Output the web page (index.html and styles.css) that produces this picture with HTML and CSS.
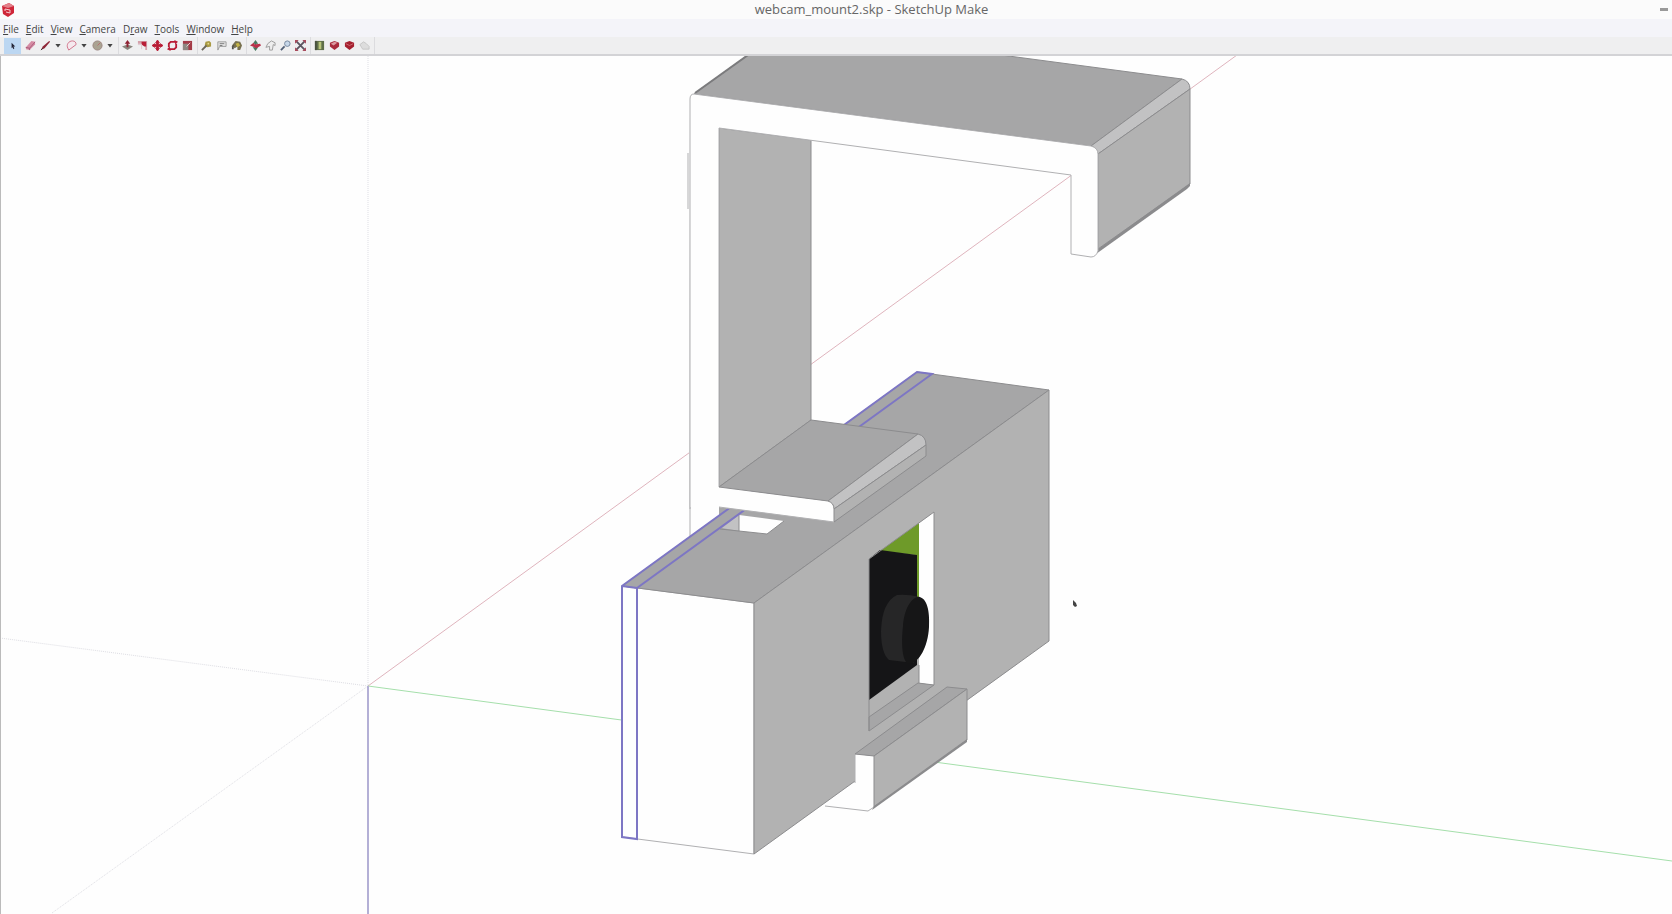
FILE: index.html
```html
<!DOCTYPE html>
<html lang="en">
<head>
<meta charset="UTF-8">
<meta name="viewport" content="width=device-width, initial-scale=1.0">
<title>webcam_mount2.skp - SketchUp Make</title>
<link rel="stylesheet" href="styles.css">
</head>
<body>

<header class="titlebar">
    <svg class="logo" viewBox="0 0 14 14"><path d="M1 3L8 0l5 3v7l-6 4-5-3z" fill="#cf2638"/><path d="M1 3l6 2 6-2-5-3z" fill="#e4808a"/><path d="M4 6l5 1v3l-4-1M4 6v2" fill="none" stroke="#f6c9cd"/></svg>
    <h1>webcam_mount2.skp - SketchUp Make</h1>
    <button class="minimize" aria-label="Minimize"></button>
</header>

<nav class="menubar">
    <button><u>F</u>ile</button>
    <button><u>E</u>dit</button>
    <button><u>V</u>iew</button>
    <button><u>C</u>amera</button>
    <button>D<u>r</u>aw</button>
    <button><u>T</u>ools</button>
    <button><u>W</u>indow</button>
    <button><u>H</u>elp</button>
</nav>

<div class="toolbar">
    <div class="group">
        <button class="tool active" aria-label="Select"><svg viewBox="0 0 12 12"><path d="M5 3v6l1-1 1 2 1-1-1-2h2z" fill="#223"/></svg></button>
        <button class="tool" aria-label="Eraser"><svg viewBox="0 0 12 12"><path d="M1 8l6-7 4 1v3l-6 6-4-1z" fill="#d58ba3"/><path d="M1 8l4 1 6-7M5 9v2" fill="none" stroke="#a65a78"/></svg></button>
        <button class="tool" aria-label="Line"><svg viewBox="0 0 12 12"><path d="M1 11l2-4 7-6 1 1-6 7z" fill="#8e2536"/><path d="M1 11l2-2" stroke="#333"/></svg></button>
        <button class="arrow" aria-label="More lines"></button>
        <button class="tool" aria-label="Arc"><svg viewBox="0 0 12 12"><path d="M2 9C0 5 3 1 7 1c3 0 4 2 4 4L3 11z" fill="#f5e9ee" stroke="#cf6d86"/></svg></button>
        <button class="arrow" aria-label="More arcs"></button>
        <button class="tool" aria-label="Shapes"><svg viewBox="0 0 12 12"><circle cx="6" cy="6" r="5" fill="#aaa392" stroke="#9b8580"/><path d="M6 6l3-3" stroke="#b76c6c"/></svg></button>
        <button class="arrow" aria-label="More shapes"></button>
    </div>
    <div class="group">
        <button class="tool" aria-label="Push/Pull"><svg viewBox="0 0 12 12"><path d="M0 7l6-2 6 2-6 4z" fill="#89867d"/><path d="M6 0L3 4h2v4h2V4h2z" fill="#8f2233"/></svg></button>
        <button class="tool" aria-label="Offset"><svg viewBox="0 0 12 12"><path d="M1 1h10v10H9V4H1z" fill="#d4a0aa"/><path d="M5 2h5v5H8L5 5z" fill="#b91d36"/><path d="M1 5h4v5" fill="none" stroke="#ddc4cb"/></svg></button>
        <button class="tool" aria-label="Move"><svg viewBox="0 0 12 12"><path d="M6 0l2 3H7v2h2V4l3 2-3 2V7H7v2h1l-2 3-2-3h1V7H3v1L0 6l3-2v1h2V3H4z" fill="#b91d36" stroke="#b91d36"/></svg></button>
        <button class="tool" aria-label="Rotate"><svg viewBox="0 0 12 12"><path d="M2 8V4l2-2h5M10 4v4l-2 2H3" fill="none" stroke="#b91d36" stroke-width="2"/><path d="M8 0l4 2-3 3zM4 12L0 10l3-3z" fill="#b91d36"/></svg></button>
        <button class="tool" aria-label="Scale"><svg viewBox="0 0 12 12"><path d="M1 1h10v10H1z" fill="#a33b47"/><path d="M1 4h6v7H1z" fill="#8d8780"/><path d="M5 7l4-4" stroke="#f0d3d6"/></svg></button>
    </div>
    <div class="group">
        <button class="tool" aria-label="Tape Measure"><svg viewBox="0 0 12 12"><path d="M5 2l4-1 2 2v4L7 8 4 6z" fill="#a99a43"/><path d="M1 11l5-5" stroke="#6b675b" stroke-width="2"/><circle cx="8" cy="4" r="1" fill="#e7dc94"/></svg></button>
        <button class="tool" aria-label="Text"><svg viewBox="0 0 12 12"><path d="M2 2h9v5H4l-2 4z" fill="#e4e4e4" stroke="#999"/><path d="M4 4h5M4 6h3" stroke="#777"/></svg></button>
        <button class="tool" aria-label="Paint Bucket"><svg viewBox="0 0 12 12"><path d="M1 6l4-5 5 1 2 4-2 5H7V7L4 9z" fill="#77704e"/><path d="M5 4l3-1 2 3-3 2z" fill="#c4b447"/><path d="M1 7l2-2v5H1z" fill="#504e48"/></svg></button>
    </div>
    <div class="group">
        <button class="tool" aria-label="Orbit"><svg viewBox="0 0 12 12"><path d="M6 0l3 4H7v4h2l-3 4-3-4h2V4H3z" fill="#48795e"/><path d="M0 6l4-3 1 2 6-1 1 2-5 3-2-1z" fill="#b9324a"/></svg></button>
        <button class="tool" aria-label="Pan"><svg viewBox="0 0 12 12"><path d="M1 8l2-4 4-3 4 2v3L9 5l-1 6H5V7z" fill="#eee" stroke="#999"/></svg></button>
        <button class="tool" aria-label="Zoom"><svg viewBox="0 0 12 12"><path d="M1 11l4-4" stroke="#526077" stroke-width="2"/><circle cx="8" cy="4" r="3" fill="#c7d7e9" stroke="#72839a"/></svg></button>
        <button class="tool" aria-label="Zoom Extents"><svg viewBox="0 0 12 12"><path d="M1 1l10 10M11 1L1 11" stroke="#5b5560" stroke-width="2"/><path d="M0 0h4L0 4zM12 0v4L8 0zM0 12V8l4 4zM12 12H8l4-4z" fill="#a84a5c"/></svg></button>
    </div>
    <div class="group">
        <button class="tool" aria-label="Add Location"><svg viewBox="0 0 12 12"><path d="M1 1h10v10H1z" fill="#5e6e48"/><path d="M5 2h3v8H5z" fill="#b9c57b"/><path d="M1 1h2v10H1z" fill="#48513f"/></svg></button>
        <button class="tool" aria-label="Get Models"><svg viewBox="0 0 12 12"><path d="M1 3l5-2 5 2v4l-5 4-5-4z" fill="#a92b3c"/><path d="M2 4l4-2 3 1-4 3z" fill="#dc9ba1"/></svg></button>
        <button class="tool" aria-label="Extension Warehouse"><svg viewBox="0 0 12 12"><path d="M1 3l5-2 5 2v4l-5 4-5-4z" fill="#a5202f"/><path d="M2 4l4 2 4-2" fill="none" stroke="#d06d75"/></svg></button>
        <button class="tool" aria-label="Share Model"><svg viewBox="0 0 12 12"><path d="M1 5l4-3 3 2 3 3v3H4z" fill="#ddd" stroke="#c6c6c6"/></svg></button>
    </div>
</div>

<main class="viewport">
    <svg class="model" viewBox="1 57 1671 858" preserveAspectRatio="xMidYMin slice" role="img" aria-label="Webcam mount model">
        <!-- axes -->
        <g fill="none">
            <path class="axis-faint" d="M368 57V687M0 639L368 687M52 914L368 687"/>
            <path class="axis-red" d="M368 687L1237 56"/>
            <path class="axis-green" d="M368 687L1672 862"/>
            <path class="axis-blue" d="M368 687V915"/>
        </g>

        <!-- back of the clamp -->
        <path class="white" d="M689 99L694 95L719 129V540H689z"/>
        <path class="edge-light" d="M690 100V540M688 154V210"/>
        <path class="side edge" d="M719 129L811 141V421L719 488z"/>

        <!-- camera housing -->
        <path class="white edge-light" d="M622 587L754 604V855L622 838z"/>
        <path class="top edge" d="M917 373L1049 391L754 604L622 587z"/>
        <path class="top" d="M719 508V517L732 510z"/>
        <path class="bevel" d="M722 529L739 516V532z"/>
        <path class="white" d="M739 516L784 522L767 535L739 532z"/>
        <path class="edge" d="M720 530L767 535M739 516V532M784 522L767 535" fill="none"/>
        <path class="side edge" d="M754 604L1049 391V642L754 855z"/>
        <path class="selected" d="M622 838V587L917 373L932 375L637 589V840zM622 587L637 589"/>

        <!-- clamp arms -->
        <path class="top edge" d="M694 95L748 56H1001L1182 80L1091 147z"/>
        <path class="edge-dark" d="M695 94L748 56"/>
        <path class="bevel edge" d="M1091 147L1182 80Q1190 82 1190 90L1098 155Q1097 149 1091 147z"/>
        <path class="side edge" d="M1098 155L1190 90V185L1098 250z"/>
        <path class="under" d="M1190 184V187L1187 190L1096 255L1098 250z"/>
        <path class="white" d="M689 99Q690 95 694 95L1091 147Q1098 149 1098 155V252Q1096 258 1091 258L1071 255V176L719 129V488L828 502Q834 504 834 510V523L719 508H690z"/>
        <path class="edge-light" d="M690 510V100Q690 95 694 95L1091 147Q1098 149 1098 155V252Q1096 258 1091 258L1071 255V176L719 129V488"/>
        <path class="top edge" d="M719 488L811 421L918 435L828 502z"/>
        <path class="bevel edge" d="M828 502L918 435Q926 437 926 446L834 510Q834 504 828 502z"/>
        <path class="side edge" d="M834 510L926 446V457L834 523z"/>
        <path class="edge-light" d="M719 508L834 523"/>

        <!-- window with the camera -->
        <path class="side" d="M869 560L934 513V686L869 732z"/>
        <path class="white" d="M919 524L934 513V686L919 684z"/>
        <path fill="#6e9a29" d="M880 552L919 524V600H916V556z"/>
        <path class="top edge" d="M869 718L918 684L934 686L869 732z"/>
        <path fill="#151517" d="M869 560L880 551L917 556V666L869 701z"/>
        <path fill="#262627" d="M897 596Q907 595 920 598L914 664L889 661Q881 654 881 632Q882 603 897 596z"/>
        <path fill="#161617" d="M919 598C927 599 930 612 929 628C928 648 919 664 909 665C902 663 901 645 903 627C904 611 911 598 919 598z"/>
        <path class="edge" fill="none" d="M919 666V684M869 560L934 513V686M869 560V732"/>

        <!-- lower hook -->
        <path class="white" d="M855 755L874 757V806Q872 812 868 812L825 806L855 784z"/>
        <path class="edge-light" d="M825 807L868 812L874 808M855 784V755"/>
        <path class="top edge" d="M855 755L947 688L967 690L874 757z"/>
        <path class="side edge" d="M874 757L967 690V741L874 808z"/>
        <path class="under" d="M967 740V743L872 811L874 807z"/>

        <!-- cursor -->
        <path fill="#444" d="M1073 601V606L1075 608L1077 607L1076 604z"/>
    </svg>
</main>

</body>
</html>
```
FILE: styles.css
```css
* {
    box-sizing: border-box;
}

body {
    margin: 0;
    height: 100vh;
    display: flex;
    flex-direction: column;
    font-family: "Open Sans", "Noto Sans", sans-serif;
    color: #444;
    background: #fefefe;
    overflow: hidden;
}

button {
    border: none;
    padding: 0;
    background: none;
    font: inherit;
    color: inherit;
}

.titlebar {
    display: grid;
    grid-template-columns: 1fr auto 1fr;
    align-items: center;
    height: 19px;
    padding: 0 4px 0 1px;
    background: #fbfbfb;
}

.titlebar h1 {
    margin: 0;
    padding-left: 74px;
    font-size: 13px;
    line-height: 19px;
    font-weight: normal;
    color: #666;
}

.logo {
    width: 14px;
    height: 14px;
}

.minimize {
    justify-self: end;
    width: 8px;
    height: 3px;
    background: #999;
}

.menubar {
    display: flex;
    gap: 7px;
    height: 18px;
    padding: 0 3px;
    background: #f4f4f9;
    font-size: 10px;
    line-height: 20px;
}

.toolbar {
    display: flex;
    height: 19px;
    padding-left: 4px;
    background: #efeff0;
    border-bottom: 2px solid #d3d3d6;
}

.group {
    display: flex;
    align-items: center;
    padding-right: 2px;
    margin-right: 1px;
    border-right: 1px solid #dcdcdf;
}

.tool {
    display: flex;
    align-items: center;
    justify-content: center;
    width: 15px;
    height: 16px;
}

.tool svg {
    width: 11px;
    height: 11px;
}

.tool.active {
    width: 17px;
    margin-right: 2px;
    background: #bcd7f2;
}

.arrow {
    width: 6px;
    height: 4px;
    margin: 0 3px 0 2px;
    background: #444;
    clip-path: polygon(0 0, 100% 0, 50% 100%);
}

.viewport {
    flex: 1;
    min-height: 0;
    border-left: 1px solid #bbb;
}

.model {
    display: block;
    width: 100%;
    height: 100%;
}

.white {
    fill: #fefefe;
}

.top {
    fill: #a6a6a7;
}

.side {
    fill: #b2b2b2;
}

.bevel {
    fill: #c2c2c3;
}

.under {
    fill: #8b8b8d;
}

.edge {
    stroke: #8c8c8e;
}

.edge-light {
    fill: none;
    stroke: #b0b0b2;
}

.white.edge-light {
    fill: #fefefe;
}

.edge-dark {
    stroke: #7b7b7d;
    stroke-width: 2;
}

.selected {
    fill: none;
    stroke: #7d76c4;
    stroke-width: 2;
}

.axis-faint {
    stroke: #dedee4;
    stroke-dasharray: 1 1;
}

.axis-red {
    stroke: #dfb4bd;
}

.axis-green {
    stroke: #a5dfab;
}

.axis-blue {
    stroke: #b4b0d6;
    stroke-width: 2;
}
```
